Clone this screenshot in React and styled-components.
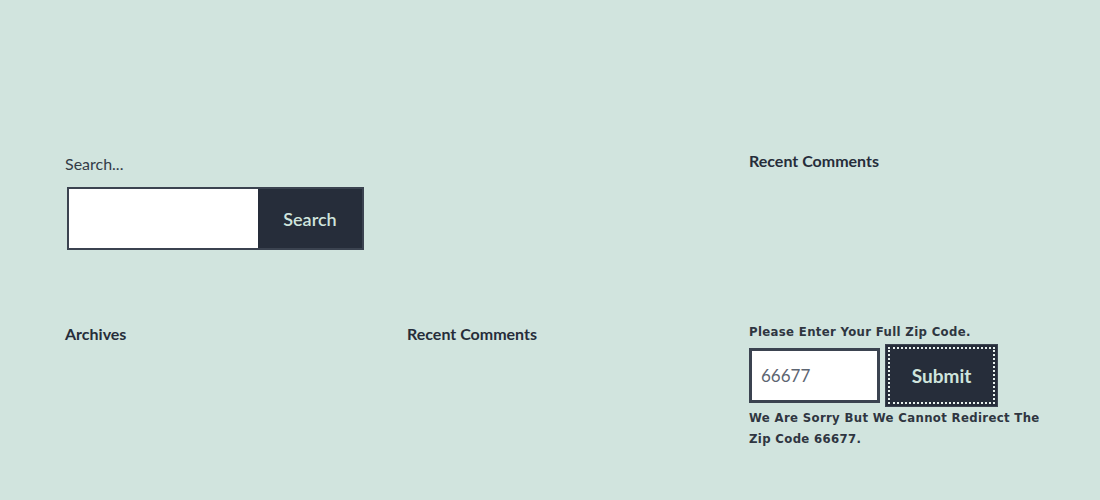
import React from "react";
import styled, { createGlobalStyle } from "styled-components";

const Global = createGlobalStyle`
  html, body { margin: 0; padding: 0; background: #d1e4de; }
  body { font-family: Lato, "Open Sans", sans-serif; color: #262d3a; }
`;

const Page = styled.div`
  padding: 150px 0 0 65px;
  display: flex;
  flex-direction: column;
  gap: 73px;
`;

const Row = styled.div`
  display: grid;
  grid-template-columns: 286px 286px 320px;
  column-gap: 56px;
  align-items: start;
`;

const Widget = styled.div`
  display: flex;
  flex-direction: column;
  align-items: flex-start;
`;

const Heading = styled.h2`
  margin: 0;
  font-family: Lato, sans-serif;
  font-size: 16px;
  font-weight: 700;
  line-height: 22px;
  color: #262d3a;
`;

const Label = styled.label`
  margin-top: 3px;
  font-family: Lato, sans-serif;
  font-size: 16px;
  line-height: 22px;
  color: #333b47;
`;

const SearchForm = styled.form`
  margin: 12px 0 0 2px;
  display: flex;
  height: 63px;
  width: 297px;
  border: 2px solid #3b4350;
  box-sizing: border-box;
`;

const SearchInput = styled.input`
  flex: 1;
  min-width: 0;
  border: none;
  background: #fff;
  margin: 0;
  padding: 0 10px;
  outline: none;
`;

const SearchButton = styled.button`
  width: 104px;
  border: none;
  background: #262d3a;
  color: #cfe4dd;
  font-family: Lato, sans-serif;
  font-size: 18px;
  font-weight: 600;
  padding: 0;
  cursor: pointer;
`;

const ZipLabel = styled.p`
  margin: 0;
  font-family: "DejaVu Sans Condensed", "DejaVu Sans", sans-serif;
  font-weight: 700;
  font-size: 13px;
  line-height: 18px;
  color: #2f3641;
  letter-spacing: 0.35px;
`;

const ZipForm = styled.form`
  margin-top: 3px;
  display: flex;
  align-items: center;
  gap: 5px;
`;

const ZipInput = styled.input`
  width: 131px;
  height: 55px;
  box-sizing: border-box;
  border: 3px solid #3b4350;
  background: #fff;
  padding: 0 9px;
  font-family: Lato, sans-serif;
  font-size: 17px;
  color: #5d6572;
  outline: none;
`;

const SubmitButton = styled.button`
  width: 113px;
  height: 63px;
  box-sizing: border-box;
  border: 1px solid #3b4350;
  background: #262d3a;
  outline: 2px dotted #e6efec;
  outline-offset: -5px;
  color: #cfe4dd;
  font-family: Lato, sans-serif;
  font-size: 19px;
  font-weight: 700;
  padding: 0;
  cursor: pointer;
`;

const Message = styled.p`
  margin: 0;
  width: 310px;
  font-family: "DejaVu Sans Condensed", "DejaVu Sans", sans-serif;
  font-weight: 700;
  font-size: 13px;
  line-height: 21px;
  color: #2f3641;
  letter-spacing: 0.35px;
`;

export default function App() {
  return (
    <>
      <Global />
      <Page>
        <Row>
          <Widget>
            <Label htmlFor="s">Search...</Label>
            <SearchForm onSubmit={(e) => e.preventDefault()}>
              <SearchInput id="s" type="text" />
              <SearchButton type="submit">Search</SearchButton>
            </SearchForm>
          </Widget>
          <Widget />
          <Widget>
            <Heading>Recent Comments</Heading>
          </Widget>
        </Row>
        <Row>
          <Widget>
            <Heading>Archives</Heading>
          </Widget>
          <Widget>
            <Heading>Recent Comments</Heading>
          </Widget>
          <Widget>
            <ZipLabel>Please Enter Your Full Zip Code.</ZipLabel>
            <ZipForm onSubmit={(e) => e.preventDefault()}>
              <ZipInput type="text" defaultValue="66677" />
              <SubmitButton type="submit">Submit</SubmitButton>
            </ZipForm>
            <Message>We Are Sorry But We Cannot Redirect The Zip Code 66677.</Message>
          </Widget>
        </Row>
      </Page>
    </>
  );
}
